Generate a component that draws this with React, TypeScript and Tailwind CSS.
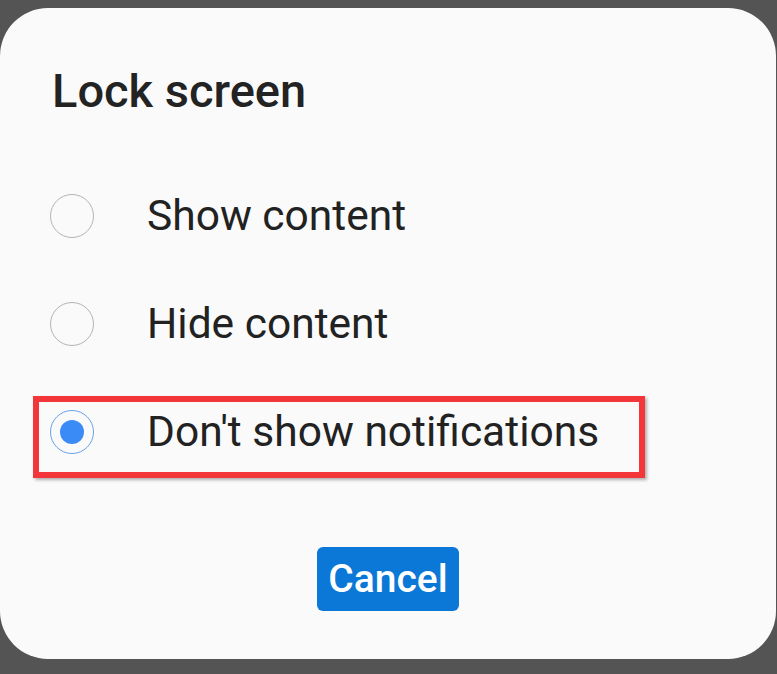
import React, { useState } from "react";

const options = ["Show content", "Hide content", "Don't show notifications"];

function Radio({ checked }: { checked: boolean }) {
    if (checked) {
        return (
            <span className="flex items-center justify-center w-[44px] h-[44px] rounded-full border-[1.5px] border-[#6aa3e6] shrink-0">
                <span className="w-[24px] h-[24px] rounded-full bg-[#3b8bf6]" />
            </span>
        );
    }
    return <span className="block w-[44px] h-[44px] rounded-full border-[1.5px] border-[#b4b4b4] shrink-0" />;
}

export default function App() {
    const [selected, setSelected] = useState(2);

    return (
        <div className="w-[777px] h-[674px] bg-[#545454] pt-[8px] overflow-hidden font-['Roboto',sans-serif]">
            <div className="w-[776px] h-[651px] bg-[#fafafa] rounded-[48px] flex flex-col pt-[59px]">
                <h1 className="pl-[52px] text-[47px] leading-[47px] font-medium text-[#232323]">
                    Lock screen
                </h1>

                <div className="flex flex-col mt-[48px]">
                    {options.map((label, i) => (
                        <div key={label} className="h-[108px] flex items-center pl-[33px]">
                            <div
                                onClick={() => setSelected(i)}
                                className={
                                    i === 2
                                        ? "flex items-center h-[82px] w-[612px] mt-[10px] pb-[10px] border-[6px] border-[#f2363a] shadow-[2px_2px_3px_rgba(0,0,0,0.3)] pl-[11px] cursor-pointer"
                                        : "flex items-center h-[82px] w-[612px] mt-[10px] pb-[10px] border-[6px] border-transparent pl-[11px] cursor-pointer"
                                }
                            >
                                <Radio checked={selected === i} />
                                <span className="ml-[53px] text-[42.5px] leading-none text-[#222]">{label}</span>
                            </div>
                        </div>
                    ))}
                </div>

                <div className="flex justify-center mt-[61px]">
                    <button
                        type="button"
                        className="w-[142px] h-[64px] rounded-[6px] bg-[#0b77d6] text-white text-[39px] font-medium leading-none"
                    >
                        Cancel
                    </button>
                </div>
            </div>
        </div>
    );
}
